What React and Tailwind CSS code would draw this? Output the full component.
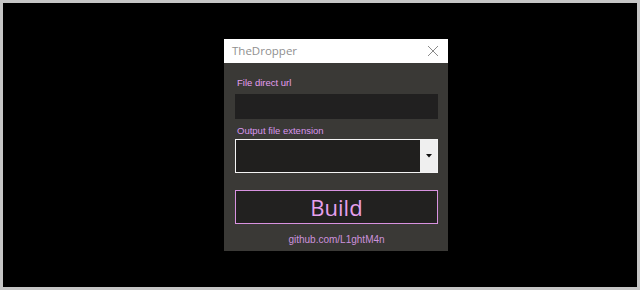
export default function App() {
  return (
    <div className="w-[640px] h-[290px] border-[3px] border-[#c6c6c6] bg-black pl-[221px] pt-[36px] box-border">
      <div className="w-[224px] flex flex-col">
        <div className="h-[24px] bg-white flex items-center justify-between pl-[8px] pr-[8px]">
          <span className="text-[11.5px] text-[#8f8f8f]" style={{ fontFamily: '"Open Sans", sans-serif' }}>TheDropper</span>
          <svg width="12" height="12" viewBox="0 0 12 12" className="mr-[1px]">
            <path d="M1 1 L11 11 M11 1 L1 11" stroke="#8a8a8a" strokeWidth="1" fill="none" />
          </svg>
        </div>
        <div className="h-[188px] bg-[#3a3936] pl-[11px] pr-[10px] flex flex-col" style={{ fontFamily: '"Liberation Sans", Arial, sans-serif' }}>
          <div className="mt-[14px] h-[12px] leading-[12px] text-[9.5px] text-[#e49ef0] pl-[2px]">File direct url</div>
          <div className="mt-[5px] h-[25px] bg-[#212020]" />
          <div className="mt-[6px] h-[12px] leading-[12px] text-[9.5px] text-[#d896ec] pl-[2px]">Output file extension</div>
          <div className="mt-[2px] h-[34px] border border-[#f4f4f4] bg-[#201f1e] flex justify-end">
            <div className="w-[17px] h-full bg-[#efefef] flex items-center justify-center">
              <svg width="6" height="4" viewBox="0 0 6 4"><path d="M0 0 L6 0 L3 3.5 Z" fill="#111" /></svg>
            </div>
          </div>
          <div className="mt-[17px] h-[34px] border border-[#d892e0] bg-[#222120] flex items-center justify-center">
            <span className="text-[22px] font-medium text-[#e6a0ee] leading-none" style={{ fontFamily: '"Open Sans", sans-serif' }}>Build</span>
          </div>
          <div className="mt-[10px] h-[12px] leading-[12px] text-[10px] text-[#cc92dc] text-center">github.com/L1ghtM4n</div>
        </div>
      </div>
    </div>
  );
}
